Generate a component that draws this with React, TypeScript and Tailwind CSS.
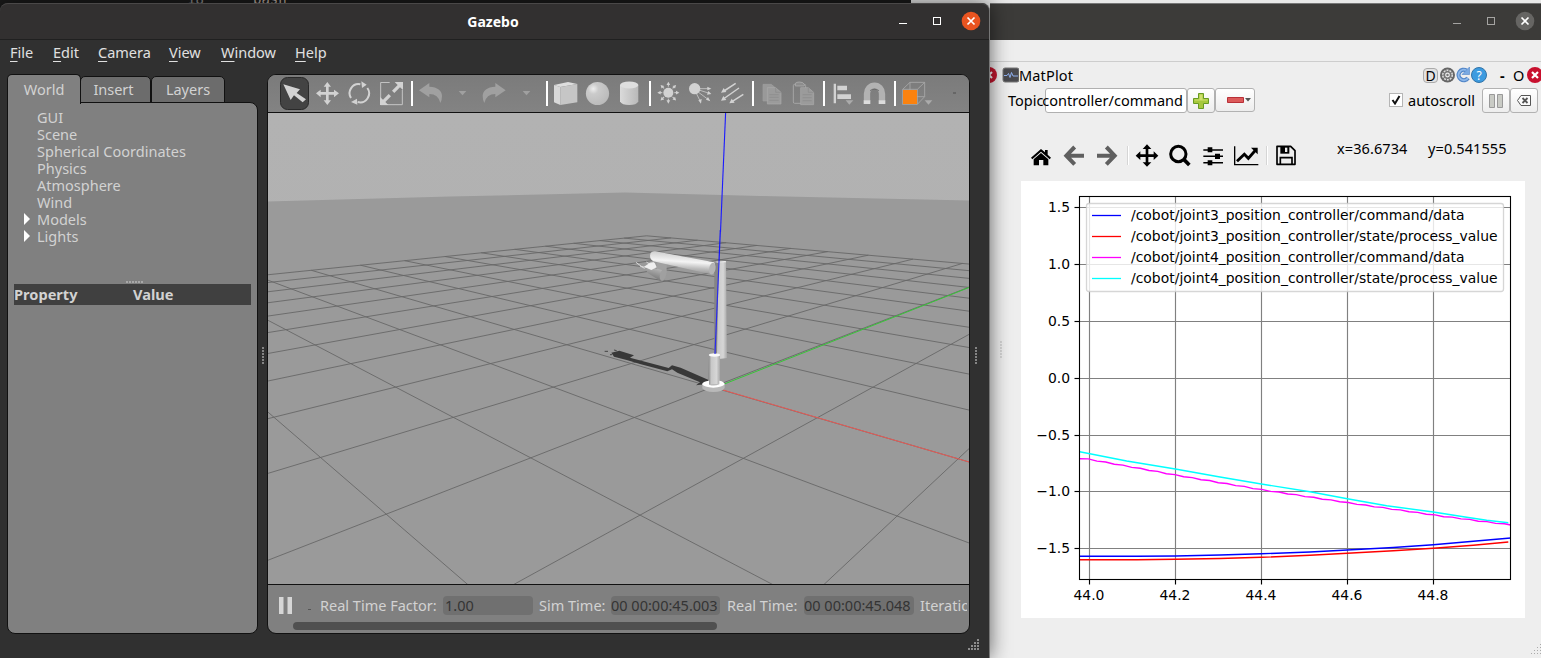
import React from "react";

type Pt = [number, number];

/* ---------- shared helpers ---------- */

function Slot({ x, w, y = 75, h = 37, children }: { x: number; w: number; y?: number; h?: number; children?: React.ReactNode }) {
  return (
    <svg className="block shrink-0" width={w} height={h} viewBox={`${x} ${y} ${w} ${h}`}>
      {children}
    </svg>
  );
}

const A = ({ children }: { children: React.ReactNode }) => <g transform="translate(265 60) scale(.33333)">{children}</g>;
const B = ({ children }: { children: React.ReactNode }) => <g transform="translate(620 60) scale(.33333)">{children}</g>;
const N = ({ children }: { children: React.ReactNode }) => <g transform="translate(985 50) scale(.33333)">{children}</g>;

const Sep = ({ x }: { x: number }) => <rect x={x} y={81} width={2} height={25} fill="#fff" />;

/* ---------- ground plane projection ---------- */

const depth = (x: number, y: number) => 1 - 0.128 * x + 0.1238 * y;
const project = (x: number, y: number): Pt => {
  const w = depth(x, y);
  return [
    265 + (988 + 75.5 * x + 273.2 * y) / w / 2.2085,
    180 + (621.5 + 0.4 * x - 2.9 * y) / w / 3,
  ];
};

function segment(a: Pt, b: Pt): string | null {
  const eps = 0.12;
  const da = depth(a[0], a[1]);
  const db = depth(b[0], b[1]);
  if (da < eps && db < eps) return null;
  let p = a;
  let q = b;
  const t = (eps - da) / (db - da);
  const c: Pt = [a[0] + (b[0] - a[0]) * t, a[1] + (b[1] - a[1]) * t];
  if (da < eps) p = c;
  if (db < eps) q = c;
  const s = project(p[0], p[1]);
  const e = project(q[0], q[1]);
  return `M${s[0].toFixed(1)} ${s[1].toFixed(1)}L${e[0].toFixed(1)} ${e[1].toFixed(1)}`;
}

const gridPath = Array.from({ length: 21 }, (_, i) => i - 10)
  .flatMap((k) => [segment([k, -10], [k, 10]), segment([-10, k], [10, k])])
  .filter(Boolean)
  .join("");

function Scene() {
  return (
    <svg className="block" width={701} height={471} viewBox="268 113 701 471">
      <defs>
        <linearGradient id="sky" x1="0" y1="0" x2="0" y2="1">
          <stop offset="0" stopColor="#b2b2b2" />
          <stop offset="1" stopColor="#afafaf" />
        </linearGradient>
        <linearGradient id="arm" x1="0" y1="0" x2="-.18" y2="1">
          <stop offset="0" stopColor="#d0d0d0" />
          <stop offset=".35" stopColor="#f4f4f4" />
          <stop offset=".6" stopColor="#bdbdbd" />
          <stop offset="1" stopColor="#767676" />
        </linearGradient>
        <linearGradient id="wrist" x1=".7" y1="0" x2=".3" y2="1">
          <stop offset="0" stopColor="#c0c0c0" />
          <stop offset="1" stopColor="#6e6e6e" />
        </linearGradient>
        <linearGradient id="post" x1="0" y1="0" x2="1" y2="0">
          <stop offset="0" stopColor="#808080" />
          <stop offset=".25" stopColor="#c8c8c8" />
          <stop offset=".7" stopColor="#d6d6d6" />
          <stop offset="1" stopColor="#a8a8a8" />
        </linearGradient>
      </defs>
      <rect x="268" y="113" width="701" height="471" fill="url(#sky)" />
      <path d="M268 201.500L450 196.500L625 192.500L760 196L969 200.500V584H268Z" fill="#9a9a9a" />
      <path d={gridPath} stroke="#686868" strokeWidth=".9" fill="none" />
      <path d="M723 384.500L969 287.500" stroke="#37c637" strokeWidth="1" />
      <path d="M723 390L969 462" stroke="#e85a55" strokeWidth="1" />
      <g transform="translate(590 230) scale(.33333)">
        <path d="M64 368L88 362L132 376L120 383L236 414L246 406L272 413L356 450L348 462L318 466L330 457L262 428L246 418L232 424L150 402L110 390L72 380Z" fill="#383838" />
        <path d="M44 364H54M72 360L80 362M60 374H66" stroke="#444" strokeWidth="3" />
        <path d="M375 98L408 94L411 384L382 388L373 372Z" fill="url(#post)" />
        <path d="M373 98H386L381 372H373Z" fill="#858585" />
        <path d="M378 95L407 93L408 97H380Z" fill="#f0f0f0" />
        <path d="M200 98H230V128H200Z" fill="#a2a2a2" />
        <path d="M182 110L226 124L222 152H210L172 128L168 118Z" fill="url(#wrist)" />
        <ellipse cx="219" cy="135" rx="9" ry="18" fill="#a0a0a0" transform="rotate(14 219 135)" />
        <path d="M162 110L180 98L194 98L200 112L184 120Z" fill="#efefef" />
        <path d="M138 97L154 109L172 113M169 96L177 101L192 97M150 108L164 115" stroke="#e8e8e8" strokeWidth="2.500" fill="none" />
        <path d="M196 64L372 97Q382 116 362 133L190 94Q176 86 182 68Q188 62 196 64Z" fill="url(#arm)" />
        <ellipse cx="367" cy="116" rx="9.500" ry="18" fill="#b4b4b4" transform="rotate(10 367 116)" />
        <path d="M357 376H390V464H355Z" fill="url(#post)" />
        <ellipse cx="373.500" cy="375" rx="17" ry="5" fill="#fafafa" />
        <path d="M337 463V475Q345 486 370 486Q398 486 404 474V462Z" fill="#b9b9b9" />
        <path d="M336 463Q338 454 357 452V464Q372 470 388 463V452Q404 455 404 463Q398 472 370 473Q342 472 336 463Z" fill="#fff" />
        <path d="M391 0L387 95" stroke="#1010ff" strokeWidth="3.500" />
        <path d="M387 95L375 372" stroke="#2a2af0" strokeWidth="3.500" />
      </g>
      <path d="M725.600 113L720.500 232" stroke="#1a1aff" strokeWidth="1.100" />
    </svg>
  );
}

/* ---------- Gazebo toolbar ---------- */

function GazeboToolbar() {
  const L = "#d2d2d2";
  const D = "#a0a0a0";
  return (
    <div className="flex h-[37px] shrink-0 bg-gradient-to-b from-[#7b7b7b] to-[#838383]">
      <Slot x={268} w={44}>
        <rect x="280.500" y="77.500" width="28" height="32" rx="7" fill="#434343" stroke="#2a2a2a" />
        <A><path d="M55 73L105 88L95 99L123 118L113 127L87 106L77 120Z" fill={L} /></A>
      </Slot>
      <Slot x={312} w={32}>
        <A>
          <path d="M187 66L198 80H191V96H207V89L222 100L207 112V104H191V121H198L187 135L176 121H183V104H167V112L153 100L167 89V96H183V80H176Z" fill={L} />
        </A>
      </Slot>
      <Slot x={344} w={30}>
        <A>
          <path d="M258 114A27 27 0 0 1 286 73M307 84A27 27 0 0 1 278 126" fill="none" stroke={L} strokeWidth="6" />
          <path d="M289 64L305 74L291 84ZM276 116L258 126L277 134Z" fill={L} />
        </A>
      </Slot>
      <Slot x={374} w={34}>
        <A>
          <path d="M374 67.500H347V134H412V90" fill="none" stroke={L} strokeWidth="2.500" />
          <path d="M414 66V90L405 82L388 99L381 92L398 75L389 66ZM345 135V111L354 119L371 102L378 109L361 126L370 135Z" fill={L} />
        </A>
      </Slot>
      <Slot x={408} w={8}><Sep x={411} /></Slot>
      <Slot x={416} w={34}>
        <A><path d="M462 91L493 69V80Q530 82 531 108Q531 119 526 129Q520 102 493 102V112Z" fill={D} /></A>
      </Slot>
      <Slot x={450} w={26}><A><path d="M581 93H604L592.500 106Z" fill={D} /></A></Slot>
      <Slot x={476} w={36}>
        <A><path d="M722 91L691 69V80Q654 82 653 108Q653 119 658 129Q664 102 691 102V112Z" fill={D} /></A>
      </Slot>
      <Slot x={512} w={30}><A><path d="M773 93H796L784.500 106Z" fill={D} /></A></Slot>
      <Slot x={542} w={8}><Sep x={546} /></Slot>
      <Slot x={550} w={32}>
        <A>
          <path d="M867 75L909 66L937 72L886 81Z" fill="#dedede" />
          <path d="M867 75L886 81V135L867 127Z" fill="#d9d9d9" />
          <path d="M886 81L937 72V127L886 135Z" fill="#c6c6c6" />
        </A>
      </Slot>
      <Slot x={582} w={32}>
        <defs>
          <radialGradient id="ball" cx=".32" cy=".3" r=".75">
            <stop offset="0" stopColor="#eee" />
            <stop offset=".3" stopColor="#cbcbcb" />
            <stop offset="1" stopColor="#bababa" />
          </radialGradient>
          <linearGradient id="can">
            <stop offset="0" stopColor="#dadada" />
            <stop offset="1" stopColor="#b9b9b9" />
          </linearGradient>
        </defs>
        <circle cx="597.500" cy="93.500" r="11.600" fill="url(#ball)" />
      </Slot>
      <Slot x={614} w={32}>
        <path d="M620 85V101.500Q622 105 629.200 105Q636.500 105 638.300 101.500V85Z" fill="url(#can)" />
        <ellipse cx="629.200" cy="85" rx="9.200" ry="3.500" fill="#dedede" />
      </Slot>
      <Slot x={646} w={8}><Sep x={649} /></Slot>
      <Slot x={654} w={30}>
        <B>
          <circle cx="145" cy="98" r="15" fill={L} />
          {[0, 45, 90, 135, 180, 225, 270, 315].map((a) => (
            <g key={a} transform={`rotate(${a} 145 98)`}>
              <path d="M163 98H170" stroke={L} strokeWidth="3" />
              <path d="M168 92.500L178 98L168 103.500Z" fill={L} />
            </g>
          ))}
        </B>
      </Slot>
      <Slot x={684} w={32}>
        <B>
          <circle cx="224" cy="86" r="17" fill={L} />
          <path d="M240 86H265M240 91L265 99M237 98L264 118M230 102L240 122" stroke={L} strokeWidth="2.200" />
          <path d="M262 80L274 86L262 91ZM265 93L274 102L261 104ZM264 111L271 124L258 119ZM235 121L245 117L243 131Z" fill={L} />
        </B>
      </Slot>
      <Slot x={716} w={32}>
        <B>
          <path d="M347 70L312 93M357 84L310 117M370 103L336 125" stroke={L} strokeWidth="4.500" />
          <path d="M303 98L311 84L319 96ZM303 122L310 108L319 120ZM328 130L335 116L344 128Z" fill={L} />
        </B>
      </Slot>
      <Slot x={748} w={8}><Sep x={752} /></Slot>
      <Slot x={756} w={30}>
        <B>
          <path d="M429 73H454L470 87V123H429Z" fill="#999" stroke={D} strokeWidth="2" />
          <path d="M442 83H467L483 97V132H442Z" fill="#9b9b9b" stroke="#ababab" strokeWidth="2" />
          <path d="M467 83V97H483M448 104H476M448 112H476M448 121H476" fill="none" stroke="#8a8a8a" strokeWidth="2" />
        </B>
      </Slot>
      <Slot x={786} w={32}>
        <B>
          <rect x="520" y="73" width="37" height="57" rx="4" fill="none" stroke="#a5a5a5" strokeWidth="3" />
          <path d="M526 78V70Q530 66 538 66Q550 66 553 73V78Z" fill="#8d8d8d" stroke="#b5b5b5" strokeWidth="2" />
          <path d="M542 83H565L581 97V134H542Z" fill="#9b9b9b" stroke="#ababab" strokeWidth="2" />
          <path d="M565 83V97H581M548 104H575M548 113H575M548 122H575" fill="none" stroke="#8a8a8a" strokeWidth="2" />
        </B>
      </Slot>
      <Slot x={818} w={10}><Sep x={823} /></Slot>
      <Slot x={828} w={30}>
        <B>
          <path d="M641 71H648V130H641ZM652 77H681V91H652ZM652 103H693V117H652Z" fill={L} />
          <path d="M677 121H700L688 134Z" fill="#ababab" />
        </B>
      </Slot>
      <Slot x={858} w={32}>
        <B>
          <path d="M741 122V101A22.500 24 0 0 1 786 101V122" fill="none" stroke="#b2b2b2" strokeWidth="19" />
          <path d="M750 92Q763 82 777 92" fill="none" stroke="#555" strokeWidth="2" />
          <path d="M731 121H751V132H731ZM776 121H796V132H776Z" fill="#dcdcdc" />
        </B>
      </Slot>
      <Slot x={890} w={8}><Sep x={894} /></Slot>
      <Slot x={898} w={40}>
        <B>
          <path d="M848 88L870 67H914V110L892 133H848ZM892 88L914 67M870 67V110L848 133M870 110H914M848 88H892V133" fill="none" stroke="#aaa" strokeWidth="2.500" />
          <rect x="849" y="90" width="42" height="42" fill="#fa820f" />
          <path d="M914 121H937L925.500 134Z" fill="#ababab" />
        </B>
      </Slot>
      <Slot x={938} w={31}><rect x="953" y="92" width="3" height="2" fill="#666" /></Slot>
    </div>
  );
}

/* ---------- Gazebo window ---------- */

const uiFont = "font-['Noto_Sans','Open_Sans',sans-serif]";

function TitleButtons({ x, active }: { x: number; active: boolean }) {
  const c = active ? "#fff" : "#a5a4a2";
  return (
    <Slot x={x} w={96} y={3} h={36}>
      <path d={`M${x + 5} 23.500h8`} stroke={c} />
      <rect x={x + 39.500} y="17.500" width="7" height="7" fill="none" stroke={c} />
      <circle cx={x + 77} cy="21" r="9.300" fill={active ? "#e95420" : "#666563"} />
      <path d={`M${x + 73.500} 17.500l7 7m0 -7l-7 7`} stroke="#fff" strokeWidth="1.700" />
    </Slot>
  );
}

const menus: [string, string][] = [
  ["File", "w-[43px]"],
  ["Edit", "w-[45px]"],
  ["Camera", "w-[71px]"],
  ["View", "w-[52px]"],
  ["Window", "w-[74px]"],
  ["Help", "w-[40px]"],
];

const tree = ["GUI", "Scene", "Spherical Coordinates", "Physics", "Atmosphere", "Wind", "Models", "Lights"];

function Grip({ vertical }: { vertical?: boolean }) {
  return (
    <div className={vertical ? "flex flex-col gap-px opacity-70" : "flex gap-px"}>
      {[0, 1, 2, 3, 4, 5].map((i) => (
        <span key={i} className="size-0.5 bg-[#a8a8a8]" />
      ))}
    </div>
  );
}

function Field({ className, children }: { className: string; children: React.ReactNode }) {
  return (
    <div className={`h-[19px] shrink-0 overflow-hidden whitespace-nowrap rounded bg-[#707070] leading-[19px] text-[#343434] ${className}`}>
      {children}
    </div>
  );
}

function GazeboWindow() {
  return (
    <div className={`absolute left-0 top-[3px] flex h-[655px] w-[990px] flex-col rounded-t-lg border-r border-[#777] bg-[#303030] text-[14.5px] text-[#d2d2d2] shadow-[0_0_20px_rgba(0,0,0,.6)] ${uiFont}`}>
      <div className="flex h-[37px] shrink-0 rounded-t-lg border-b border-[#202020] border-t border-t-[#4a4848] bg-[#323030]">
        <div className="w-[895px] pl-[92px] text-center text-[14px] font-bold leading-[35px] text-white">Gazebo</div>
        <div className="-mr-px -mt-px"><TitleButtons x={894} active /></div>
      </div>
      <div className="flex h-[34px] shrink-0 pl-[10px] leading-[24px] text-[#e0e0e0]">
        {menus.map(([m, w]) => (
          <div key={m} className={`whitespace-nowrap ${w}`}>
            <span className="underline underline-offset-[3px]">{m[0]}</span>
            {m.slice(1)}
          </div>
        ))}
      </div>
      <div className="flex h-[560px] shrink-0 pl-[7px]">
        <div className="flex w-[251px] flex-col">
          <div className="flex h-[29px] items-end">
            <div className="z-10 -mb-px h-[30px] w-[74px] rounded-t-[5px] border border-b-0 border-[#111] bg-[#808080] text-center leading-[29px]">World</div>
            <div className="-ml-px h-[27px] w-[71px] rounded-t-[5px] border border-[#111] bg-[#6c6c6c] pr-1 text-center leading-[25px]">Insert</div>
            <div className="h-[27px] w-[74px] rounded-t-[5px] border border-[#111] bg-[#6c6c6c] text-center leading-[25px]">Layers</div>
          </div>
          <div className="-mt-px flex h-[532px] flex-col rounded-lg rounded-tl-none border border-[#111] bg-[#808080]">
            <div className="h-[178px] pt-[6px]">
              {tree.map((t, i) => (
                <div key={t} className="flex h-[17px] items-center whitespace-nowrap leading-[17px]">
                  <span className="-mt-px flex w-[29px] pl-4">
                    {i > 5 && (
                      <svg width="6" height="12" viewBox="0 0 6 12"><path d="M0 0L6 6L0 12Z" fill="#fff" /></svg>
                    )}
                  </span>
                  {t}
                </div>
              ))}
            </div>
            <div className="flex h-[3px] justify-center pl-1"><Grip /></div>
            <div className="mx-[6px] flex h-[21px] bg-[#404040] font-bold leading-[21px] text-[14.6px]">
              <div className="w-[119px]">Property</div>
              <div>Value</div>
            </div>
          </div>
        </div>
        <div className="flex w-[9px] items-center justify-center pt-0.5"><Grip vertical /></div>
        <div className="flex w-[703px] flex-col overflow-hidden rounded-[9px] border border-[#111] bg-[#808080]">
          <GazeboToolbar />
          <div className="border-y border-[#111]"><Scene /></div>
          <div className="flex h-[36px] w-[700px] items-center overflow-hidden whitespace-nowrap pt-[5px]">
            <Slot x={268} w={52} y={594} h={24}>
              <path d="M279 597h4.500v17h-4.500zM287.500 597h4.500v17h-4.500z" fill="#d6d6d6" />
              <path d="M308 609.500h3" stroke="#555" />
            </Slot>
            <div className="w-[123px] shrink-0">Real Time Factor:</div>
            <Field className="w-[90px] pl-[2px]">1.00</Field>
            <div className="w-[78px] shrink-0 pl-[6px]">Sim Time:</div>
            <Field className="w-[109px]">00 00:00:45.003</Field>
            <div className="w-[84px] shrink-0 pl-[7px]">Real Time:</div>
            <Field className="w-[110px]">00 00:00:45.048</Field>
            <div className="w-[53px] shrink-0 overflow-hidden pl-[6px]">Iterations:</div>
          </div>
          <div className="ml-[25px] mt-px h-2 w-[424px] shrink-0 rounded bg-[#505050]" />
        </div>
        <div className="flex w-[11px] items-center justify-center pt-0.5"><Grip vertical /></div>
      </div>
      <div className="flex h-[24px] items-start justify-end pr-[9px] pt-[5px]">
        <svg width="12" height="11" viewBox="0 0 12 11">
          {[0, 1, 2, 3].flatMap((r) =>
            Array.from({ length: r + 1 }, (_, k) => (
              <rect key={`${r}${k}`} x={9 - k * 3} y={r * 3} width="2" height="2" fill="#8c8c8c" />
            )),
          )}
        </svg>
      </div>
    </div>
  );
}

/* ---------- plot ---------- */

const traces: Record<string, Pt[]> = {
  "#0000ff": [[179, 1129], [350, 1129], [466, 1128], [600, 1125], [724, 1121.5], [870, 1116], [982, 1110], [1120, 1102.5], [1240, 1094], [1360, 1084], [1472, 1074]],
  "#ff0000": [[179, 1139], [350, 1139], [466, 1138], [600, 1135.5], [724, 1132], [870, 1126], [982, 1120], [1120, 1112.5], [1240, 1105], [1360, 1096], [1465, 1086]],
  "#00ffff": [[179, 815], [320, 843], [466, 867], [600, 891], [724, 912], [870, 935], [982, 956], [1100, 977], [1240, 996], [1340, 1012], [1400, 1021], [1465, 1028]],
};

const magentaKeys: Pt[] = [[179, 835], [208, 838], [466, 885], [724, 929], [982, 968], [1240, 1005], [1472, 1035]];
const magenta: Pt[] = [];
for (let x = 179, i = 0; x <= 1472; x += 26, i++) {
  const k = magentaKeys.findIndex((p) => p[0] > x);
  const [a, b] = k > 0 ? [magentaKeys[k - 1], magentaKeys[k]] : [magentaKeys[5], magentaKeys[6]];
  const y = a[1] + ((b[1] - a[1]) * (x - a[0])) / (b[0] - a[0]);
  magenta.push([x, y + (i % 2 ? -1 : 1)]);
}
magenta.push([1472, 1035]);
traces["#ff00ff"] = magenta;

const legend: [string, string, number, number][] = [
  ["/cobot/joint3_position_controller/command/data", "#0000ff", 215, 333.5],
  ["/cobot/joint3_position_controller/state/process_value", "#ff0000", 236, 366.5],
  ["/cobot/joint4_position_controller/command/data", "#ff00ff", 257, 333.5],
  ["/cobot/joint4_position_controller/state/process_value", "#00ffff", 278, 366.5],
];

const yTicks: [string, number][] = [["1.5", 207.5], ["1.0", 264.5], ["0.5", 321.5], ["0.0", 378.5], ["−0.5", 435.5], ["−1.0", 491.5], ["−1.5", 548.5]];
const xTicks: [string, number][] = [["44.0", 1089.5], ["44.2", 1175.5], ["44.4", 1261.5], ["44.6", 1347.5], ["44.8", 1433.5]];

function Plot() {
  return (
    <svg className="block bg-white font-['DejaVu_Sans',sans-serif] text-[13.9px]" width={504} height={437} viewBox="1021 181 504 437">
      {xTicks.map(([t, x]) => (
        <g key={t}>
          <path d={`M${x} 196V579`} stroke="#808080" strokeWidth="1.150" />
          <path d={`M${x} 580V584.500`} stroke="#000" strokeWidth="1.150" />
          <text x={x - 0.5} y="600" textAnchor="middle">{t}</text>
        </g>
      ))}
      {yTicks.map(([t, y]) => (
        <g key={t}>
          <path d={`M1079 ${y}H1510`} stroke="#808080" strokeWidth="1.150" />
          <path d={`M1074.500 ${y}H1079`} stroke="#000" strokeWidth="1.150" />
          <text x="1070" y={y + 4.7} textAnchor="end">{t}</text>
        </g>
      ))}
      {Object.entries(traces).map(([c, pts]) => (
        <polyline key={c} points={pts.map(([x, y]) => `${(1020 + x / 3).toFixed(1)},${(180 + y / 3).toFixed(1)}`).join(" ")} fill="none" stroke={c} strokeWidth="1.400" />
      ))}
      <rect x="1079.500" y="196.500" width="431" height="383" fill="none" stroke="#000" strokeWidth="1.100" />
      <rect x="1086.500" y="203.500" width="417" height="88" rx="2.500" fill="#fff" fillOpacity=".8" stroke="#ccc" strokeOpacity=".8" strokeWidth="1.300" />
      {legend.map(([t, c, y, w]) => (
        <g key={t}>
          <path d={`M1092 ${y + 0.5}H1121`} stroke={c} strokeWidth="1.300" />
          <text x="1131" y={y + 5} textLength={w}>{t}</text>
        </g>
      ))}
    </svg>
  );
}

/* ---------- rqt window ---------- */

const btn = "flex items-center justify-center rounded-[3px] border border-[#b2b2b2] bg-gradient-to-b from-white to-[#ededed]";

function RqtWindow() {
  return (
    <div className={`absolute left-[990px] top-[3px] flex h-[655px] w-[551px] flex-col bg-[#eeeeee] text-[14.5px] text-black ${uiFont}`}>
      <div className="flex h-[37px] shrink-0 justify-end border-t border-[#777] bg-[#3c3b39]">
        <div className="-mr-[3px] -mt-px"><TitleButtons x={1448} active={false} /></div>
      </div>
      <div className="h-[22px] shrink-0 border-b border-[#cdcdcd]" />
      <div className="flex h-[26px] shrink-0 items-center">
        <Slot x={990} w={29} y={62} h={26}>
          <circle cx="989" cy="75" r="8" fill="#c4162f" />
          <path d="M986 72l6 6m0 -6l-6 6" stroke="#fff" strokeWidth="2" />
          <rect x="1003" y="68" width="16" height="14" rx="2" fill="#4a4a4e" stroke="#777" />
          <path d="M1004 75.500h3l1.500-2 1.500 4 1.500-5 1.500 3.500h5" fill="none" stroke="#8fb0ee" />
        </Slot>
        <div className="w-[404px] pt-[2px] tracking-[0.15px]">MatPlot</div>
        <div className="flex h-[15px] w-[15px] items-center justify-center rounded-sm border border-[#aaa] bg-[#e2e2e2] pt-px text-[14px]">D</div>
        <Slot x={1438} w={62} y={62} h={26}>
          <circle cx="1447.500" cy="75" r="7.500" fill="#666" />
          <circle cx="1447.500" cy="75" r="4.800" fill="#777" stroke="#ddd" strokeWidth="1.500" strokeDasharray="2 1" />
          <circle cx="1447.500" cy="75" r="1.800" fill="none" stroke="#eee" strokeWidth="1.200" />
          <path d="M1466.500 70.500A5.200 5.200 0 1 0 1468 78" fill="none" stroke="#5286c8" strokeWidth="4.200" />
          <path d="M1466.500 70.500A5.200 5.200 0 1 0 1468 78" fill="none" stroke="#8db8ea" strokeWidth="2" />
          <path d="M1469.500 67V74.500H1462Z" fill="#79a9e2" stroke="#5286c8" strokeWidth=".6" />
          <circle cx="1479" cy="75" r="7.500" fill="#3c9be0" stroke="#3274a8" />
          <text x="1479" y="79.500" textAnchor="middle" fill="#fff" className="text-[12px]">?</text>
        </Slot>
        <div className="w-[13px] pt-[2px] font-bold">-</div>
        <div className="w-[13px] pt-[1px]">O</div>
        <Slot x={1526} w={15} y={62} h={26}>
          <circle cx="1535" cy="75" r="8" fill="#c8102e" />
          <path d="M1532 72l6 6m0 -6l-6 6" stroke="#fff" strokeWidth="2.200" />
        </Slot>
      </div>
      <div className="flex h-[26px] shrink-0 items-start pl-[18px]">
        <div className="w-[37px] leading-[25px]">Topic</div>
        <div className="flex h-[25px] w-[142px] justify-end whitespace-nowrap rounded-[3px] border border-[#b0b0b0] bg-white pr-[3px] leading-[23px] tracking-[0.02px]">controller/command</div>
        <div className={`h-[25px] w-[28px] ${btn}`}>
          <svg width="16" height="16" viewBox="0 0 16 16"><path d="M5.500 .5h5v5h5v5h-5v5h-5v-5h-5v-5h5z" fill="#a6c83c" stroke="#679a22" /><path d="M6.500 1.500h3v5h5v1h-13v-1h5z" fill="#d0e070" /></svg>
        </div>
        <div className={`h-[24px] w-[40px] pl-[8px] ${btn}`}>
          <svg width="24" height="8" viewBox="0 0 24 8"><path d="M.5 1.500h16v5h-16z" fill="#dc5a5a" stroke="#b83038" /><path d="M18 2h6l-3 3.500z" fill="#555" /></svg>
        </div>
        <div className="ml-[134px] mt-[5px] flex size-[14px] items-center justify-center border border-[#b5b5b5] bg-white">
          <svg width="10" height="10" viewBox="0 0 10 10"><path d="M1.500 5L4 8.500L8.500 1" fill="none" stroke="#111" strokeWidth="2" /></svg>
        </div>
        <div className="ml-[5px] w-[74px] leading-[25px]">autoscroll</div>
        <div className={`h-[25px] w-[28px] ${btn}`}>
          <svg width="14" height="14" viewBox="0 0 14 14"><path d="M.5 .5h5v13h-5zM8.500 .5h5v13h-5z" fill="#c9cbc5" stroke="#999" /></svg>
        </div>
        <div className={`h-[25px] w-[28px] pr-px ${btn}`}>
          <svg width="14" height="11" viewBox="0 0 14 11"><path d="M4 .5h9.500v10H4L.5 5.500z" fill="#fafafa" stroke="#555" /><path d="M5.500 3l5 5m0-5l-5 5" stroke="#555" strokeWidth="1.900" /></svg>
        </div>
      </div>
      <div className="flex h-[67px] shrink-0 pt-[28px]">
        <Slot x={990} w={66} y={142} h={28}>
          <N>
            <path d="M138 323L168 297L180 307V300H188V314L198 323L194 328L168 305L142 328Z" />
            <path d="M146 328L168 309L190 328V346H175V330H162V346H146Z" />
          </N>
        </Slot>
        <Slot x={1056} w={32} y={142} h={28}><N><path d="M297 317H247M269 291L244 317L269 343" fill="none" stroke="#5f5f5f" strokeWidth="12" /></N></Slot>
        <Slot x={1088} w={36} y={142} h={28}><N><path d="M336 317H386M364 291L389 317L364 343" fill="none" stroke="#5f5f5f" strokeWidth="12" /></N></Slot>
        <Slot x={1124} w={8} y={142} h={28}><path d="M1127.500 146V165" stroke="#d5d5d5" /><path d="M1128.500 146V165" stroke="#fff" /></Slot>
        <Slot x={1132} w={32} y={142} h={28}>
          <N><path d="M486 283L499 297H490V313H506V304L520 317L506 330V321H490V337H499L486 350L473 337H482V321H466V330L452 317L466 304V313H482V297H473Z" /></N>
        </Slot>
        <Slot x={1164} w={32} y={142} h={28}>
          <N><circle cx="580" cy="312" r="23" fill="none" stroke="#000" strokeWidth="9" /><path d="M597 329L613 345" stroke="#000" strokeWidth="11" /></N>
        </Slot>
        <Slot x={1196} w={32} y={142} h={28}>
          <N>
            <path d="M655 300H714M655 319H714M655 338H714" stroke="#000" strokeWidth="4.500" />
            <path d="M668 292H682V307H668ZM690 311H705V327H690ZM668 331H682V346H668Z" />
          </N>
        </Slot>
        <Slot x={1228} w={34} y={142} h={28}>
          <N>
            <path d="M749 289V344H820" fill="none" stroke="#000" strokeWidth="4" />
            <path d="M756 334L778 313L790 325L812 300" fill="none" stroke="#000" strokeWidth="8.500" />
            <path d="M798 293H818V313Z" />
          </N>
        </Slot>
        <Slot x={1262} w={10} y={142} h={28}><path d="M1266.500 146V165" stroke="#d5d5d5" /><path d="M1267.500 146V165" stroke="#fff" /></Slot>
        <Slot x={1272} w={65} y={142} h={28}>
          <g transform="translate(1270 0) scale(.33333)">
            <path d="M21 439H62L75 452V493H21Z" fill="#eee" stroke="#000" strokeWidth="5" strokeLinejoin="round" />
            <path d="M31 439H58V461H31Z" />
            <path d="M45 443H52V456H45Z" fill="#eee" />
            <path d="M31 493V473H66V493" fill="none" stroke="#000" strokeWidth="5" />
          </g>
        </Slot>
        <div className="-mt-[7px] w-[91px] leading-[26px] tracking-[0.1px]">x=36.6734</div>
        <div className="-mt-[7px] leading-[26px] tracking-[0.1px]">y=0.541555</div>
      </div>
      <div className="flex items-center">
        <div className="flex w-[31px] justify-center self-start pr-[9px] pt-[160px] opacity-50"><Grip vertical /></div>
        <Plot />
      </div>
      <div className="flex flex-1 items-end justify-end pb-1">
        <svg width="11" height="10" viewBox="0 0 11 10">
          {[0, 1, 2, 3].flatMap((r) =>
            Array.from({ length: r + 1 }, (_, k) => (
              <rect key={`${r}${k}`} x={10 - k * 3} y={r * 3} width="1" height="1" fill="#aaa" />
            )),
          )}
        </svg>
      </div>
    </div>
  );
}

export default function App() {
  return (
    <div className="relative h-[658px] w-[1541px] overflow-hidden bg-[#e8e8e8]">
      <div className="relative h-[10px] w-[911px] overflow-hidden bg-[#1a1a1a] font-['DejaVu_Sans_Mono',monospace] text-[14px] leading-[17px]">
        <div className="-mt-[9px] flex pl-[187px]">
          <span className="w-[66px] text-[#888]">18</span>
          <span className="text-[#b9a9a0]">bash</span>
        </div>
      </div>
      <RqtWindow />
      <GazeboWindow />
    </div>
  );
}
